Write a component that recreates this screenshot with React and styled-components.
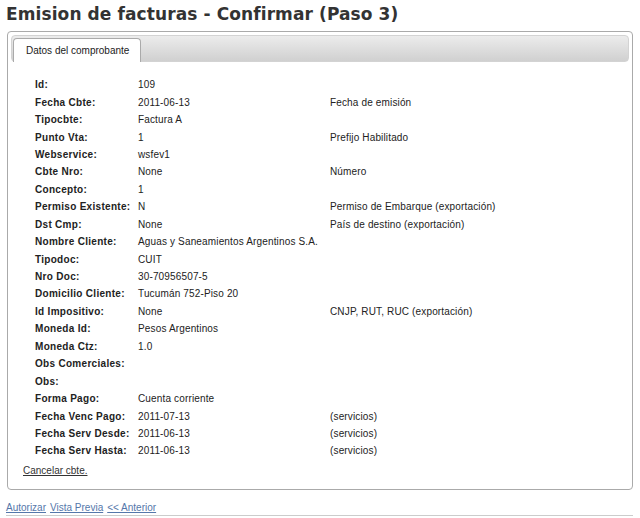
import React from 'react';
import styled, { createGlobalStyle } from 'styled-components';

const GlobalStyle = createGlobalStyle`
  body {
    margin: 0;
    background: #fff;
    font-family: "Liberation Sans", Arial, sans-serif;
    color: #222;
  }
`;

const Page = styled.div`
  width: 640px;
  padding: 0 7px 0 6px;
  box-sizing: border-box;
`;

const Title = styled.h1`
  margin: 0;
  padding-top: 2px;
  font-family: "DejaVu Sans", Verdana, sans-serif;
  font-size: 17px;
  font-weight: bold;
  line-height: 25px;
  letter-spacing: 0.1px;
  color: #333;
`;

const Tabs = styled.div`
  margin: 4px 0 0 1px;
  border: 1px solid #aaa;
  border-radius: 4px;
  padding: 3px;
  background: #fff;
`;

const TabNav = styled.ul`
  display: flex;
  margin: 0;
  padding: 2px 1px 0;
  list-style: none;
  height: 23px;
  border: 1px solid #d3d3d3;
  border-radius: 4px;
  background: linear-gradient(#ececec, #d0d0d0);
`;

const Tab = styled.li`
  display: flex;
  align-items: center;
  padding: 0 11px 0 12px;
  margin-bottom: -1px;
  background: #fff;
  border: 1px solid #aaa;
  border-bottom: none;
  border-radius: 4px 4px 0 0;
  font-size: 10px;
  color: #212121;
`;

const Panel = styled.div`
  padding: 14px 12px 8px 12px;
`;

const Grid = styled.div`
  display: grid;
  grid-template-columns: 103px 192px auto;
  grid-auto-rows: 17.45px;
  align-items: center;
  margin-left: 12px;
  font-size: 10px;
`;

const Label = styled.div`
  font-weight: bold;
  letter-spacing: 0.3px;
  color: #222;
`;

const Value = styled.div`
  white-space: nowrap;
  letter-spacing: 0.15px;
  color: #222;
`;

const CancelLink = styled.a`
  display: inline-block;
  margin-top: 4px;
  font-size: 10px;
  color: #333;
  text-decoration: underline;
`;

const Actions = styled.div`
  display: flex;
  gap: 4px;
  margin-top: 11px;
  padding-bottom: 1px;
  border-bottom: 1px solid #ccc;
  font-size: 10px;
  line-height: 13px;
`;

const ActionLink = styled.a`
  color: #5577aa;
  text-decoration: underline;
`;

const rows = [
  ['Id:', '109', ''],
  ['Fecha Cbte:', '2011-06-13', 'Fecha de emisión'],
  ['Tipocbte:', 'Factura A', ''],
  ['Punto Vta:', '1', 'Prefijo Habilitado'],
  ['Webservice:', 'wsfev1', ''],
  ['Cbte Nro:', 'None', 'Número'],
  ['Concepto:', '1', ''],
  ['Permiso Existente:', 'N', 'Permiso de Embarque (exportación)'],
  ['Dst Cmp:', 'None', 'País de destino (exportación)'],
  ['Nombre Cliente:', 'Aguas y Saneamientos Argentinos S.A.', ''],
  ['Tipodoc:', 'CUIT', ''],
  ['Nro Doc:', '30-70956507-5', ''],
  ['Domicilio Cliente:', 'Tucumán 752-Piso 20', ''],
  ['Id Impositivo:', 'None', 'CNJP, RUT, RUC (exportación)'],
  ['Moneda Id:', 'Pesos Argentinos', ''],
  ['Moneda Ctz:', '1.0', ''],
  ['Obs Comerciales:', '', ''],
  ['Obs:', '', ''],
  ['Forma Pago:', 'Cuenta corriente', ''],
  ['Fecha Venc Pago:', '2011-07-13', '(servicios)'],
  ['Fecha Serv Desde:', '2011-06-13', '(servicios)'],
  ['Fecha Serv Hasta:', '2011-06-13', '(servicios)'],
];

export default function App() {
  return (
    <Page>
      <GlobalStyle />
      <Title>Emision de facturas - Confirmar (Paso 3)</Title>
      <Tabs>
        <TabNav>
          <Tab>Datos del comprobante</Tab>
        </TabNav>
        <Panel>
          <Grid>
            {rows.map(([label, value, note]) => (
              <React.Fragment key={label}>
                <Label>{label}</Label>
                <Value>{value}</Value>
                <Value>{note}</Value>
              </React.Fragment>
            ))}
          </Grid>
          <CancelLink href="#">Cancelar cbte.</CancelLink>
        </Panel>
      </Tabs>
      <Actions>
        <ActionLink href="#">Autorizar</ActionLink>
        <ActionLink href="#">Vista Previa</ActionLink>
        <ActionLink href="#">&lt;&lt; Anterior</ActionLink>
      </Actions>
    </Page>
  );
}
